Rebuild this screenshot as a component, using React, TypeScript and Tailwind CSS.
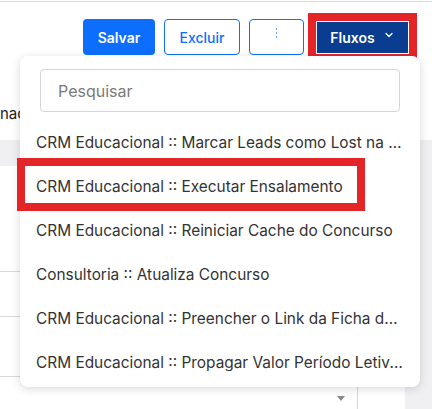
import { ChevronDown } from "lucide-react";

// Barra de ações com o menu "Fluxos" aberto.

const FLOWS = [
  "CRM Educacional :: Marcar Leads como Lost na fase de Inscrição",
  "CRM Educacional :: Executar Ensalamento",
  "CRM Educacional :: Reiniciar Cache do Concurso",
  "Consultoria :: Atualiza Concurso",
  "CRM Educacional :: Preencher o Link da Ficha de Inscrição",
  "CRM Educacional :: Propagar Valor Período Letivo Atual",
];

export default function App() {
  return (
    <div
      className="relative h-[409px] w-[432px] overflow-hidden bg-white"
      style={{ fontFamily: "Inter, 'Noto Sans', sans-serif" }}
    >
      <div className="mt-px h-px bg-[#dcdcdc]" />

      {/* toolbar */}
      <div className="flex h-[72px] items-center justify-end pr-[15px] pb-[2px]">
        <button className="h-[36px] w-[72px] rounded bg-[#0d6efd] text-[14px] font-semibold text-white">
          Salvar
        </button>
        <button className="ml-[9px] h-[36px] w-[76px] rounded border border-[#0d6efd] bg-white text-[14px] font-medium text-[#0d6efd]">
          Excluir
        </button>
        <button className="ml-[9px] flex h-[36px] w-[55px] items-center justify-center rounded border border-[#0d6efd] bg-white">
          <span className="flex flex-col gap-[2px] pb-2">
            <span className="h-[2px] w-[1px] bg-[#6ea2f5]" />
            <span className="h-[2px] w-[1px] bg-[#6ea2f5]" />
            <span className="h-[2px] w-[1px] bg-[#6ea2f5]" />
          </span>
        </button>
        <div className="ml-[4px] border-[8px] border-[#e32528] p-px">
          <button className="flex h-[31px] w-[91px] items-center justify-center gap-2 bg-[#0a3d8f] text-[14px] font-semibold text-white">
            Fluxos
            <ChevronDown className="mb-1 h-3 w-3" strokeWidth={2.5} />
          </button>
        </div>
      </div>

      {/* conteúdo por trás do menu */}
      <div className="h-[66px] pt-[29px] text-[15px] text-[#222]">nacionais</div>
      <div className="flex">
        <div className="w-[405px]">
          <div className="h-[26px] bg-[#f0f0f2]" />
          <div className="h-[105px]" />
          <div className="h-[45px] border-t border-[#d8d8d8]" />
          <div className="h-[60px] border-t border-[#d8d8d8]" />
          <div className="flex h-[40px] border-t border-[#d8d8d8]">
            <div className="flex flex-1 items-start justify-end pt-[19px] pr-[12px]">
              <span className="h-0 w-0 border-x-[4px] border-t-[5px] border-x-transparent border-t-[#8a8a8a]" />
            </div>
            <div className="mt-[10px] w-[48px] border-l border-[#d8d8d8]" />
          </div>
        </div>
        <div className="flex-1 bg-[#f0f0f2]" />
      </div>

      {/* menu Fluxos */}
      <div className="absolute left-[20px] top-[56px] h-[331px] w-[400px] rounded-lg bg-white pt-[13px] shadow-[0_2px_10px_rgba(0,0,0,0.15)]">
        <div className="px-[20px]">
          <div className="flex h-[43px] items-center rounded border border-[#d5d5d5] pl-[17px] text-[16px] text-[#7a7a7a]">
            Pesquisar
          </div>
        </div>
        <ul className="mt-[8px]">
          {FLOWS.map((f) => (
            <li
              key={f}
              className="flex h-[44px] items-center pl-[16px] pr-[16px] pt-px text-[15.4px] text-[#333]"
            >
              <span className="truncate">{f}</span>
            </li>
          ))}
        </ul>
      </div>

      {/* destaque */}
      <div className="absolute left-[17px] top-[158px] h-[53px] w-[348px] border-[8px] border-[#e32528]" />
    </div>
  );
}
